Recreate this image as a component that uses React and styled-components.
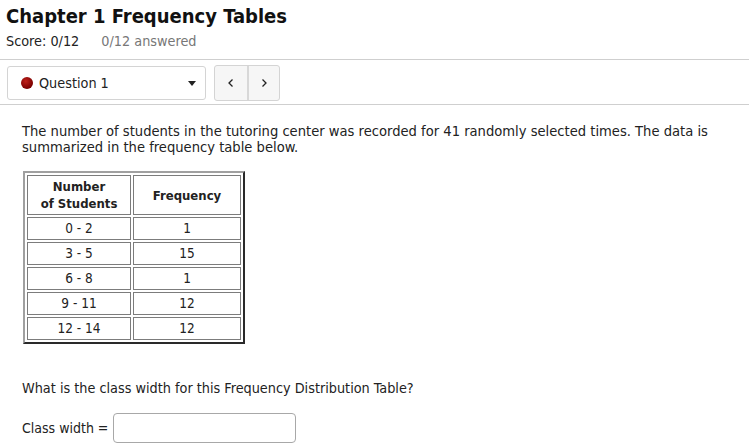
import React from "react";
import styled, { createGlobalStyle } from "styled-components";

const GlobalStyle = createGlobalStyle`
  html, body {
    margin: 0;
    padding: 0;
    background: #ffffff;
  }
  body {
    font-family: "DejaVu Sans Condensed", "DejaVu Sans", sans-serif;
    color: #222;
  }
`;

const rows = [
  { range: "0 - 2", freq: 1 },
  { range: "3 - 5", freq: 15 },
  { range: "6 - 8", freq: 1 },
  { range: "9 - 11", freq: 12 },
  { range: "12 - 14", freq: 12 },
];

const Page = styled.div`
  width: 749px;
  height: 447px;
  overflow: hidden;
`;

const Header = styled.header`
  padding: 3px 6px 0;
  border-bottom: 1px solid #cfcfcf;
  height: 60px;
  box-sizing: border-box;
`;

const Title = styled.h1`
  margin: 0;
  font-size: 20px;
  font-weight: bold;
  color: #111;
  line-height: 26px;
`;

const ScoreLine = styled.div`
  display: flex;
  gap: 22px;
  margin-top: 4px;
  font-size: 14.3px;
  line-height: 16px;
`;

const Score = styled.span`
  color: ${(p) => (p.muted ? "#777" : "#222")};
`;

const Toolbar = styled.div`
  display: flex;
  align-items: center;
  gap: 8px;
  padding: 5px 7px 3px;
  border-bottom: 1px solid #cfcfcf;
`;

const QuestionSelect = styled.div`
  width: 199px;
  height: 34px;
  box-sizing: border-box;
  border: 1px solid #d4d4d4;
  border-radius: 3px;
  display: flex;
  align-items: center;
  padding: 0 9px 0 13px;
  font-size: 14.3px;
  color: #222;
`;

const Dot = styled.span`
  width: 12px;
  height: 12px;
  border-radius: 50%;
  background: radial-gradient(circle at 40% 35%, #c0201a, #7a0000 70%);
  margin-right: 6px;
`;

const Caret = styled.span`
  margin-left: auto;
  width: 0;
  height: 0;
  border-left: 4px solid transparent;
  border-right: 4px solid transparent;
  border-top: 5px solid #222;
`;

const NavGroup = styled.div`
  display: flex;
  height: 34px;
  border: 1px solid #d4d4d4;
  border-radius: 3px;
  background: #f6f6f6;
  overflow: hidden;
`;

const NavButton = styled.button`
  width: 32px;
  border: none;
  border-left: ${(p) => (p.divider ? "2px solid #d8d8d8" : "none")};
  background: transparent;
  padding: 0;
  display: flex;
  align-items: center;
  justify-content: center;
  color: #222;
`;

const Body = styled.main`
  padding: 18px 22px 0;
  font-size: 14.6px;
  line-height: 16px;
`;

const Paragraph = styled.p`
  margin: 0;
  max-width: 700px;
`;

const FreqTable = styled.table`
  margin: 16px 0 0 1px;
  border: 2px solid;
  border-color: #a0a0a0 #2a2a2a #2a2a2a #a0a0a0;
  border-spacing: 2px;
  border-collapse: separate;
  font-size: 13.5px;
  line-height: 17px;
`;

const Th = styled.th`
  border: 1px solid #7c7c7c;
  font-weight: bold;
  font-size: 13px;
  height: 38px;
  padding: 0;
  width: ${(p) => p.w}px;
`;

const Td = styled.td`
  border: 1px solid #7c7c7c;
  text-align: center;
  height: 21px;
  padding: 0;
`;

const Question = styled.p`
  margin: 36px 0 0;
  font-size: 14.3px;
`;

const AnswerRow = styled.div`
  display: flex;
  align-items: center;
  gap: 5px;
  margin-top: 17px;
  font-size: 14px;
`;

const AnswerInput = styled.input`
  width: 183px;
  height: 30px;
  box-sizing: border-box;
  border: 1px solid #a8a8a8;
  border-radius: 4px;
  font: inherit;
`;

const Chevron = ({ dir }) => (
  <svg width="8" height="10" viewBox="0 0 8 10">
    <path
      d={dir === "left" ? "M5.5 1.5 L2 5 L5.5 8.5" : "M2.5 1.5 L6 5 L2.5 8.5"}
      fill="none"
      stroke="#222"
      strokeWidth="1.3"
    />
  </svg>
);

export default function App() {
  return (
    <Page>
      <GlobalStyle />
      <Header>
        <Title>Chapter 1 Frequency Tables</Title>
        <ScoreLine>
          <Score>Score: 0/12</Score>
          <Score muted>0/12 answered</Score>
        </ScoreLine>
      </Header>
      <Toolbar>
        <QuestionSelect>
          <Dot />
          Question 1
          <Caret />
        </QuestionSelect>
        <NavGroup>
          <NavButton>
            <Chevron dir="left" />
          </NavButton>
          <NavButton divider>
            <Chevron dir="right" />
          </NavButton>
        </NavGroup>
      </Toolbar>
      <Body>
        <Paragraph>
          The number of students in the tutoring center was recorded for 41 randomly selected times.
          The data is summarized in the frequency table below.
        </Paragraph>
        <FreqTable>
          <thead>
            <tr>
              <Th w={102}>
                Number
                <br />
                of Students
              </Th>
              <Th w={106}>Frequency</Th>
            </tr>
          </thead>
          <tbody>
            {rows.map((r) => (
              <tr key={r.range}>
                <Td>{r.range}</Td>
                <Td>{r.freq}</Td>
              </tr>
            ))}
          </tbody>
        </FreqTable>
        <Question>What is the class width for this Frequency Distribution Table?</Question>
        <AnswerRow>
          <span>Class width =</span>
          <AnswerInput />
        </AnswerRow>
      </Body>
    </Page>
  );
}
